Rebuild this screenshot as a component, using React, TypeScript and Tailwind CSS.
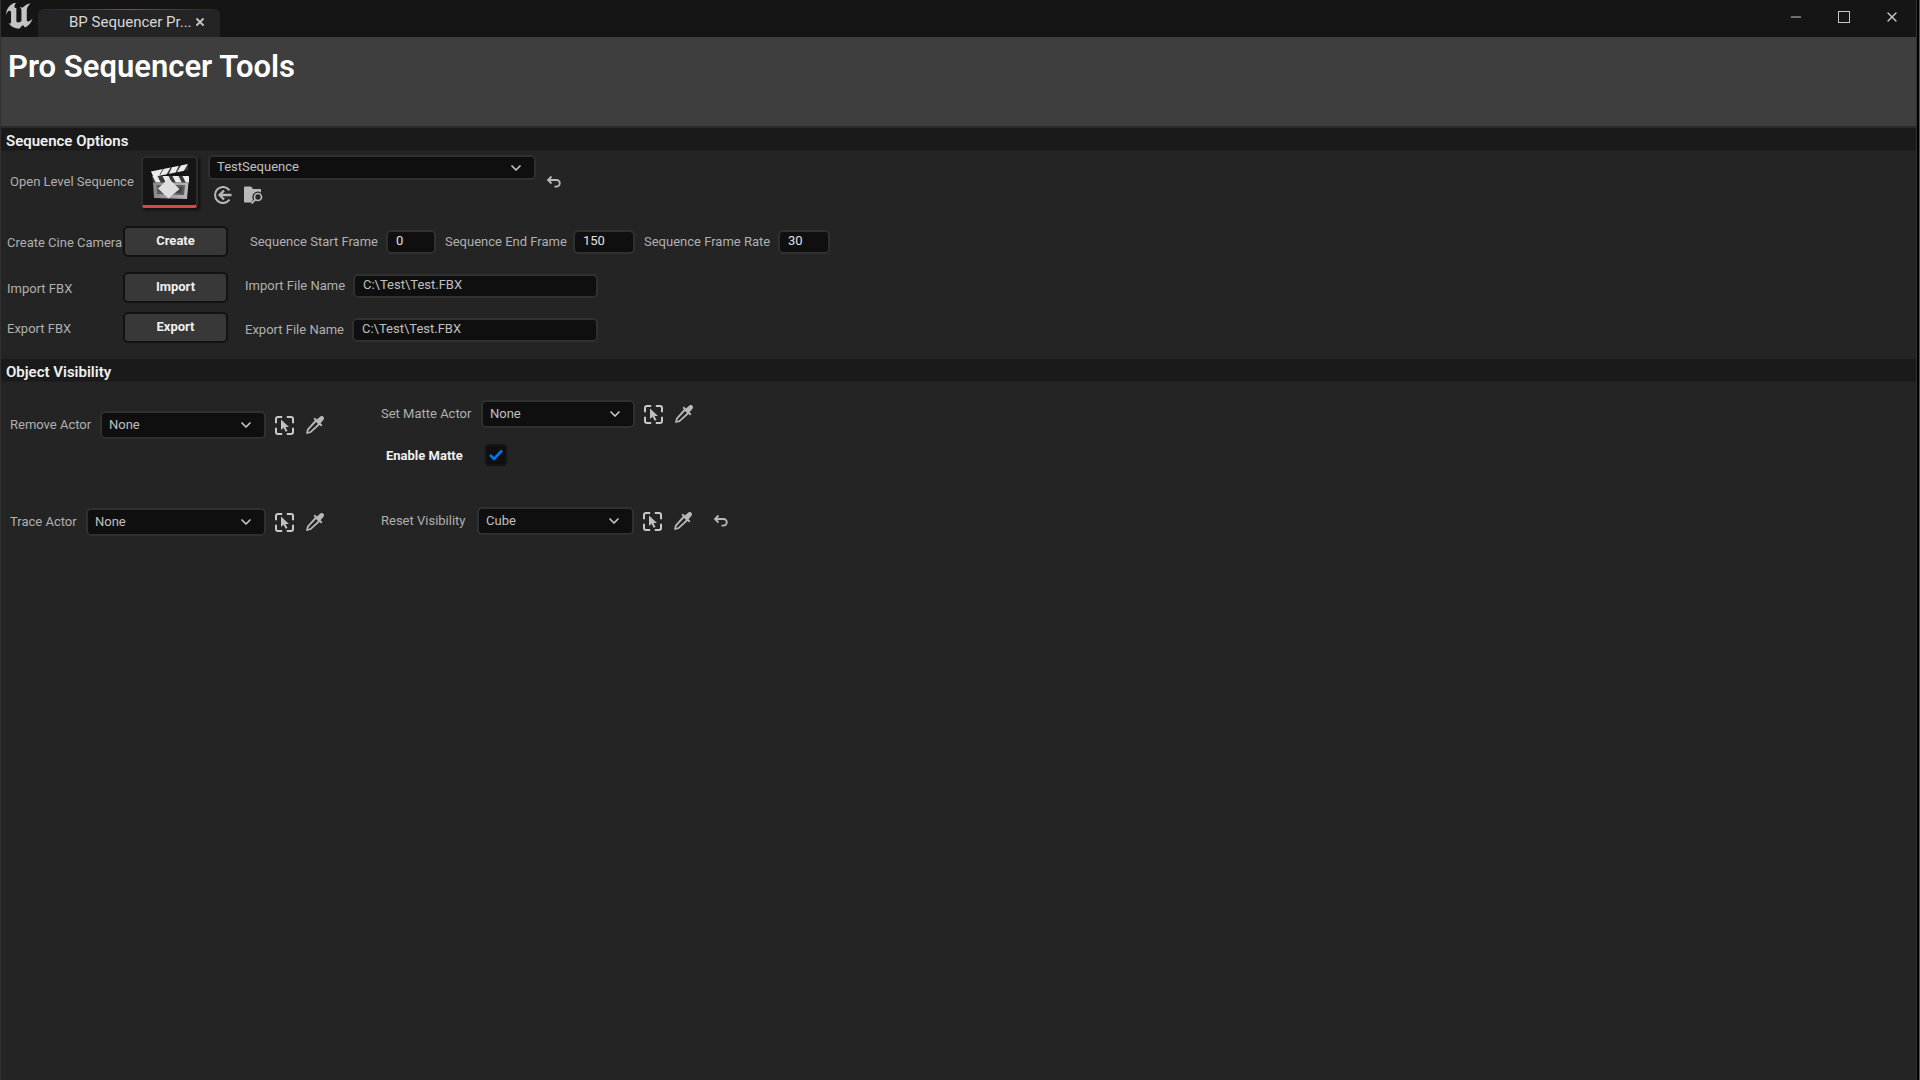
import { ChevronDown, Minus, X } from "lucide-react";
import type { ReactNode } from "react";

const labelText = "text-[13px] leading-4 text-[#b0b0b0]";

function UnrealLogo() {
  return (
    <svg viewBox="4.9 5.3 14.3 14.2" className="h-[26px] w-[27px] fill-[#c4c4c4]" aria-hidden="true">
      <path d="M19.13 13.729c-.206.997-1.126 3.557-4.06 4.942l-1.179-1.325-1.988 2a7.338 7.338 0 01-5.804-2.978 2.859 2.859 0 00.65.123c.326.006.678-.114.678-.66v-5.394a.89.89 0 00-1.116-.89c-.92.212-1.656 2.509-1.656 2.509a7.304 7.304 0 012.528-5.597 7.408 7.408 0 013.73-1.721c-1.006.573-1.57 1.507-1.57 2.29 0 1.262.76 1.109.984.923v7.28a1.157 1.157 0 00.148.256 1.075 1.075 0 00.88.445c.76 0 1.747-.868 1.747-.868V9.172c0-.6-.452-1.324-.905-1.572 0 0 .838-.149 1.484.346a5.537 5.537 0 01.387-.425c1.508-1.48 2.929-1.902 4.112-2.112 0 0-2.151 1.69-2.151 3.96 0 1.687.043 5.801.043 5.801.799.771 1.986-.342 3.059-1.441Z" />
    </svg>
  );
}

function ClapperIcon() {
  return (
    <svg viewBox="0 0 40 38" className="h-[38px] w-10" aria-hidden="true">
      <defs>
        <linearGradient id="slate" x1="0" y1="0" x2="1" y2="0">
          <stop offset="0" stopColor="#8a8a8a" />
          <stop offset="1" stopColor="#b8b8b8" />
        </linearGradient>
        <clipPath id="clap-top">
          <path d="M1 8.5 38 1v6L3 14Z" />
        </clipPath>
        <clipPath id="clap-bottom">
          <path d="M2 13h37v6.5H3Z" />
        </clipPath>
      </defs>
      <g clipPath="url(#clap-top)">
        <path d="M0 0h40v16H0Z" fill="#3a3a3a" />
        <path d="m-1 6 7-2 5 10-6 2ZM14 4l-7 12h-6l7-12ZM22 2l-7 12h-6l7-12ZM30 0l-6 13h-6l6-13ZM39-1l-7 12h-6l7-12Z" fill="#ececec" />
      </g>
      <g clipPath="url(#clap-bottom)">
        <path d="M0 12h40v9H0Z" fill="#3a3a3a" />
        <path d="M2 12h5l4 8H6ZM12 12h6l4 8h-6ZM22 12h6l4 8h-6ZM32 12h6l4 8h-6Z" fill="#ececec" />
      </g>
      <path d="M3 19.5h35.5L37 36 4 35Z" fill="url(#slate)" />
      <path d="M6.5 22H35l-1 10-27-1Z" fill="#5c5c5c" />
      <path d="M8.5 24h24l-1 6-22-1Z" fill="#444" />
      <path d="m18.5 15.5 11 10.500-11 9.500L8 25.500Z" fill="#dedede" />
    </svg>
  );
}

function UseSelectedIcon() {
  return (
    <svg viewBox="0 0 18 18" className="size-[18px]" fill="none" stroke="#b8b8b8" strokeWidth="2" aria-hidden="true">
      <path d="M15.5 4.300A8 8 0 1 0 15.500 13.700" />
      <path d="M17.5 9h-12M10 4.500 5.500 9 10 13.500" strokeWidth="2.300" />
    </svg>
  );
}

function BrowseIcon() {
  return (
    <svg viewBox="0 0 19 18" className="h-[18px] w-[19px]" fill="none" aria-hidden="true">
      <path d="M0 1.500Q0 .5 1 .5h6L9 3h8v3.500A5.500 5.500 0 0 0 9 13.500L7 16.500H1q-1 0-1-1Z" fill="#b8b8b8" />
      <circle cx="14" cy="11" r="3.500" stroke="#b8b8b8" strokeWidth="1.700" />
      <path d="m11.5 13.500-4 4" stroke="#b8b8b8" strokeWidth="1.800" />
    </svg>
  );
}

function SelectActorIcon() {
  return (
    <svg viewBox="0 0 19 19" className="size-[19px]" fill="none" aria-hidden="true">
      <path
        d="M1 7.200V3q0-2 2-2h4.200M11.800 1H16q2 0 2 2v4.200M18 11.800V16q0 2-2 2h-4.200M7.200 18H3q-2 0-2-2v-4.200"
        stroke="#c8c8c8"
        strokeWidth="2"
      />
      <path d="M6 3.500v10.500l2.600-2.300 2 4.100 1.900-.9-2-4H14Z" fill="#c0c0c0" />
    </svg>
  );
}

function EyedropperIcon() {
  return (
    <svg viewBox="3 3 18 18" className="size-[18px] fill-[#b8b8b8]" aria-hidden="true">
      <path d="M20.300 6.900a2.200 2.200 0 0 0-3.200-3.200l-3.260 2.710-1.930-1.910-1.410 1.410 1.420 1.420L4 16.250 3 21l4.750-1 8.920-7.920 1.420 1.420 1.410-1.410-1.920-1.920ZM7.200 18.300 5.200 19l.5-2 7.360-7.980 1.920 1.920Z" />
    </svg>
  );
}

function SectionHeader({ children }: { children: ReactNode }) {
  return (
    <h2 className="h-[23px] border-b border-[#1f1f1f] bg-[#1a1a1a] pl-[5px] text-[15px] leading-[26px] font-semibold text-[#f0f0f0]">
      {children}
    </h2>
  );
}

type DropdownProps = {
  id: string;
  options: string[];
  className: string;
};

function Dropdown({ id, options, className }: DropdownProps) {
  return (
    <span className={`relative block shrink-0 ${className}`}>
      <select
        id={id}
        className="block size-full appearance-none rounded-[5px] border-2 border-[#303030] bg-[#0f0f0f] pb-px pl-[7px] text-[13px] leading-4 text-[#c0c0c0] outline-none"
      >
        {options.map((o) => (
          <option key={o}>{o}</option>
        ))}
      </select>
      <ChevronDown
        className="pointer-events-none absolute top-1/2 right-3 size-4 -translate-y-1/2 text-[#c8c8c8]"
        strokeWidth={2.5}
      />
    </span>
  );
}

function TextField({ id, value, className }: { id: string; value: string; className: string }) {
  return (
    <input
      id={id}
      defaultValue={value}
      className={`h-6 shrink-0 rounded-[5px] border-2 border-[#303030] bg-[#0f0f0f] px-2 pb-0.5 text-[13px] leading-4 outline-none ${className}`}
    />
  );
}

function ActionButton({ children }: { children: ReactNode }) {
  return (
    <button className="h-[31px] w-[105px] shrink-0 rounded-[5px] border-2 border-[#121212] bg-[#383838] pb-0.5 text-[13px] leading-4 font-bold text-[#f0f0f0]">
      {children}
    </button>
  );
}

function ActorTools() {
  return (
    <span className="ml-[9px] flex items-center gap-3">
      <button aria-label="Use selected actor">
        <SelectActorIcon />
      </button>
      <button aria-label="Pick actor from scene">
        <EyedropperIcon />
      </button>
    </span>
  );
}

function ResetButton() {
  return (
    <button aria-label="Reset to default">
      <svg viewBox="0 0 16 16" className="size-4" fill="none" stroke="#b8b8b8" strokeWidth="1.800" aria-hidden="true">
        <path d="M5.5 2.500 2 6l3.500 3.500M2 6h8.500a3.300 3.300 0 0 1 0 6.600H8.500" />
      </svg>
    </button>
  );
}

function TitleBar() {
  return (
    <header className="flex h-[37px] bg-[#151515]">
      <div className="w-[37px] shrink-0 pt-[3px] pl-[5px]">
        <UnrealLogo />
      </div>
      <div className="mt-[9px] w-[182px] overflow-hidden rounded-t-md bg-[#242424]">
        <div className="h-px bg-gradient-to-r from-transparent via-[#0070e0] to-transparent" />
        <div className="flex h-6 items-center pl-[31px] text-[15px] leading-5 text-[#d8d8d8]">
          <span>BP Sequencer Pr...</span>
          <button aria-label="Close tab" className="ml-0.5 text-[#c0c0c0]">
            <X className="size-3" strokeWidth={4} />
          </button>
        </div>
      </div>
      <div className="ml-auto flex h-[34px] items-center gap-8 pr-4 text-[#c8c8c8]">
        <button aria-label="Minimize">
          <Minus className="size-4" strokeWidth={1.5} />
        </button>
        <button aria-label="Maximize" className="flex size-4 items-center justify-center">
          <span className="block size-3 border border-current" />
        </button>
        <button aria-label="Close">
          <X className="size-4" strokeWidth={2} />
        </button>
      </div>
    </header>
  );
}

function SequenceOptions() {
  return (
    <section>
      <SectionHeader>Sequence Options</SectionHeader>
      <div className="h-52 pt-1">
        <div className="flex pl-[9px]">
          <label htmlFor="sequence" className={`mt-[19px] w-[131px] shrink-0 ${labelText}`}>
            Open Level Sequence
          </label>
          <div className="mt-px flex h-[52px] w-[57px] shrink-0 items-center justify-center rounded border-2 border-b-[3px] border-[#2c2c2c] border-b-[#d04c4c] bg-[#151515] shadow-[2px_2px_3px_#111]">
            <ClapperIcon />
          </div>
          <div className="ml-2.5">
            <Dropdown id="sequence" options={["TestSequence"]} className="h-[25px] w-[328px]" />
            <div className="mt-1.5 flex gap-3 pl-1.5">
              <button aria-label="Use selected asset">
                <UseSelectedIcon />
              </button>
              <button aria-label="Browse to asset">
                <BrowseIcon />
              </button>
            </div>
          </div>
          <div className="mt-[18px] ml-[10px]">
            <ResetButton />
          </div>
        </div>

        <div className="mt-[18px] flex h-[31px] items-center pl-1.5">
          <span className={`w-[116px] shrink-0 pt-0.5 ${labelText}`}>Create Cine Camera</span>
          <ActionButton>Create</ActionButton>
          <label htmlFor="start-frame" className={`ml-[22px] w-[136px] ${labelText}`}>
            Sequence Start Frame
          </label>
          <TextField id="start-frame" value="0" className="w-[50px] text-[#e0e0e0]" />
          <label htmlFor="end-frame" className={`ml-[9px] w-32 ${labelText}`}>
            Sequence End Frame
          </label>
          <TextField id="end-frame" value="150" className="w-[62px] text-[#e0e0e0]" />
          <label htmlFor="frame-rate" className={`ml-[9px] w-[134px] ${labelText}`}>
            Sequence Frame Rate
          </label>
          <TextField id="frame-rate" value="30" className="w-[52px] text-[#e0e0e0]" />
        </div>

        <div className="mt-[15px] flex h-[31px] items-center pl-1.5">
          <span className={`w-[116px] shrink-0 pt-0.5 ${labelText}`}>Import FBX</span>
          <ActionButton>Import</ActionButton>
          <div className="mb-1 ml-[17px] flex items-center">
            <label htmlFor="import-file" className={`w-[108px] ${labelText}`}>
              Import File Name
            </label>
            <TextField id="import-file" value="C:\Test\Test.FBX" className="w-[245px] text-[#c0c0c0]" />
          </div>
        </div>

        <div className="mt-[9px] flex h-[31px] items-center pl-1.5">
          <span className={`w-[116px] shrink-0 pt-0.5 ${labelText}`}>Export FBX</span>
          <ActionButton>Export</ActionButton>
          <div className="mt-1 ml-[17px] flex items-center">
            <label htmlFor="export-file" className={`w-[107px] ${labelText}`}>
              Export File Name
            </label>
            <TextField id="export-file" value="C:\Test\Test.FBX" className="w-[246px] text-[#c0c0c0]" />
          </div>
        </div>
      </div>
    </section>
  );
}

function ObjectVisibility() {
  return (
    <section>
      <SectionHeader>Object Visibility</SectionHeader>
      <div className="grid grid-cols-[371px_1fr] pt-[18px] pl-[9px]">
        <div className="flex h-[106px] items-start pt-[11px]">
          <div className="flex items-center">
            <label htmlFor="remove-actor" className={`w-[90px] ${labelText}`}>
              Remove Actor
            </label>
            <Dropdown id="remove-actor" options={["None"]} className="h-7 w-[166px]" />
            <ActorTools />
          </div>
        </div>
        <div>
          <div className="flex items-center">
            <label htmlFor="matte-actor" className={`w-[100px] ${labelText}`}>
              Set Matte Actor
            </label>
            <Dropdown id="matte-actor" options={["None"]} className="h-7 w-[154px]" />
            <ActorTools />
          </div>
          <div className="mt-4 flex items-center pl-[5px]">
            <label htmlFor="enable-matte" className="w-[99px] pt-0.5 text-[13px] leading-4 font-bold text-[#f0f0f0]">
              Enable Matte
            </label>
            <span className="relative block size-[22px]">
              <input
                id="enable-matte"
                type="checkbox"
                defaultChecked
                className="peer block size-full appearance-none rounded border-2 border-[#151515] bg-[#0f0f0f]"
              />
              <svg
                viewBox="0 0 22 22"
                className="pointer-events-none absolute inset-0 hidden size-full peer-checked:block"
                fill="none"
                stroke="#0078f0"
                strokeWidth="2.600"
                aria-hidden="true"
              >
                <path d="m5 11 4 4 8-8.500" />
              </svg>
            </span>
          </div>
        </div>
        <div className="flex items-center pt-0.5">
          <label htmlFor="trace-actor" className={`w-[76px] ${labelText}`}>
            Trace Actor
          </label>
          <Dropdown id="trace-actor" options={["None"]} className="h-7 w-[180px]" />
          <ActorTools />
        </div>
        <div className="flex items-center">
          <label htmlFor="reset-visibility" className={`w-[96px] ${labelText}`}>
            Reset Visibility
          </label>
          <Dropdown id="reset-visibility" options={["Cube"]} className="h-7 w-[157px]" />
          <ActorTools />
          <div className="ml-[21px] flex">
            <ResetButton />
          </div>
        </div>
      </div>
    </section>
  );
}

export default function App() {
  return (
    <div className="min-h-screen border-r border-[#555] bg-black pr-0.5 font-['Roboto',sans-serif]">
      <div className="min-h-screen border-x border-[#303030] bg-[#242424]">
        <TitleBar />
        <main>
          <div className="h-[91px] border-b-2 border-[#2a2a2a] bg-[#3e3e3e] pt-2.5 pl-[7px]">
            <h1 className="text-[31px] leading-10 font-semibold text-white">Pro Sequencer Tools</h1>
          </div>
          <SequenceOptions />
          <ObjectVisibility />
        </main>
      </div>
    </div>
  );
}
